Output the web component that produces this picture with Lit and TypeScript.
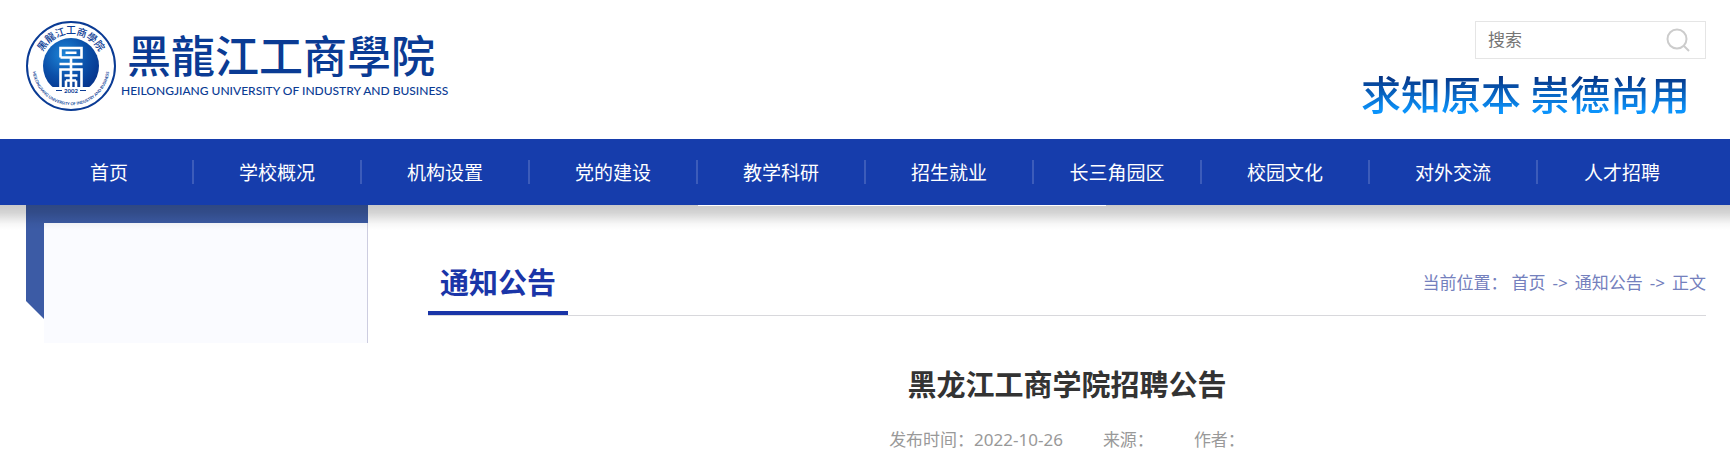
import { LitElement, html, css } from "lit";
import { customElement } from "lit/decorators.js";

const NAV = ["首页", "学校概况", "机构设置", "党的建设", "教学科研", "招生就业", "长三角园区", "校园文化", "对外交流", "人才招聘"];

@customElement("site-emblem")
class SiteEmblem extends LitElement {
  static styles = css`
    :host { display: block; width: 90px; height: 92px; }
    svg { display: block; width: 100%; height: 100%; }
    text { font-family: "Noto Sans CJK SC", sans-serif; fill: #0a3b94; }
    .cn { font-size: 10px; font-weight: 500; }
    .en { font-size: 4px; font-weight: 700; font-family: Lato, sans-serif; }
    .year { font-size: 6px; font-weight: 700; font-family: Lato, sans-serif; }
  `;
  render() {
    return html`<svg viewBox="1 0 90 92" role="img" aria-label="黑龙江工商学院校徽">
      <defs>
        <radialGradient id="disc" cx="0.38" cy="0.3" r="0.75">
          <stop offset="0" stop-color="#1d86d8" /><stop offset="0.55" stop-color="#0b4fa8" /><stop offset="1" stop-color="#053189" />
        </radialGradient>
        <path id="top" d="M14.5 46 A31.5 31.5 0 0 1 77.5 46" />
        <path id="bottom" d="M8.500 38 A38.5 38.5 0 1 0 83.500 38" />
      </defs>
      <circle cx="46" cy="46" r="44" fill="#fff" stroke="#0a3b94" stroke-width="2" />
      <circle cx="46" cy="46" r="28" fill="url(#disc)" />
      <text class="cn"><textPath href="#top" startOffset="50%" text-anchor="middle">黑龍江工商學院</textPath></text>
      <text class="en"><textPath href="#bottom" startOffset="50%" text-anchor="middle">HEILONGJIANG UNIVERSITY OF INDUSTRY AND BUSINESS</textPath></text>
      <path d="M27 67 H65 V75 H27 Z" fill="#fff" />
      <text class="year" x="46" y="73" text-anchor="middle">2002</text>
      <path d="M31 70.500 H37 M55 70.500 H61" stroke="#0a3b94" stroke-width="1" />
      <g fill="none" stroke="#fff" stroke-width="2.6">
        <path d="M35.500 37.500 V28 H56.500 V37.500 H35.500 M40.500 32.800 H51.500 M46 37.500 V44 M34.500 44 H57.500" />
        <path d="M35.500 67 V49.500 H56.500 V67 M46 44 V67 M39.500 55.500 H52.500 M41 60.500 H51 M41 60.500 V67 M51 60.500 V67" />
      </g>
    </svg>`;
  }
}

@customElement("app-root")
class AppRoot extends LitElement {
  static styles = css`
    :host { display: block; min-height: 100vh; background: #fff; color: #333; font-family: "Noto Sans", "Noto Sans CJK SC", sans-serif; font-size: 17px; line-height: 24px; }
    * { box-sizing: border-box; }
    a { color: inherit; text-decoration: none; }
    h1, h2, p, ul { margin: 0; padding: 0; }
    .wrap { padding: 0 24px 0 26px; }
    .top { display: flex; justify-content: space-between; padding-top: 20px; height: 139px; }
    .brand { display: flex; align-items: flex-start; gap: 5px; color: #0a3b94; }
    .names { display: flex; flex-direction: column; padding-top: 8px; }
    .cn { font-family: "Noto Sans CJK SC", sans-serif; font-size: 44px; line-height: 52px; font-weight: 500; padding-left: 6px; }
    .en { font-family: Lato, sans-serif; font-size: 12px; line-height: 22px; font-weight: 500; }
    .tools { display: flex; flex-direction: column; align-items: flex-end; padding-top: 1px; }
    .search { display: flex; align-items: center; width: 231px; height: 38px; border: 1px solid #e5e5e5; padding: 0 15px 0 12px; }
    .search input { flex: 1; min-width: 0; border: 0; outline: 0; padding: 0 0 2px; background: none; font: inherit; color: #333; height: 34px; }
    .search input::placeholder { color: #757575; opacity: 1; }
    .search button { border: 0; padding: 0; background: none; width: 24px; height: 24px; }
    .search svg { display: block; }
    .motto { font-family: "Noto Sans CJK SC", sans-serif; font-size: 40px; line-height: 44px; font-weight: 500; margin: 12px 16px 0 0; background: linear-gradient(#053080 10%, #0b93fb 90%); -webkit-background-clip: text; background-clip: text; color: transparent; }
    .bar { position: relative; z-index: 1; background: #163dac; }
    .bar::after { content: ""; position: absolute; left: 0; right: 0; top: 100%; height: 25px; background: linear-gradient(rgba(0, 0, 0, 0.21), rgba(0, 0, 0, 0.17) 30%, rgba(0, 0, 0, 0.1) 52%, rgba(0, 0, 0, 0.03) 76%, transparent); pointer-events: none; }
    .nav { display: grid; grid-template-columns: repeat(10, 1fr); list-style: none; }
    .nav li { display: flex; align-items: center; height: 66px; }
    .nav a { flex: 1; text-align: center; color: #fff; font-size: 19px; line-height: 24px; padding-top: 2px; }
    .nav li:not(:last-child)::after { content: ""; width: 2px; height: 24px; background: #3c5cba; }
    .dropline { position: absolute; z-index: 1; top: 100%; left: 698px; width: 408px; height: 1px; background: #fff; }
    .main { display: flex; gap: 60px; }
    .side { width: 342px; height: 138px; display: flex; background: #3c5ba5; padding-top: 18px; clip-path: polygon(0 0, 100% 0, 100% 100%, 18px 100%, 18px 114px, 0 96px); }
    .panel { flex: 1; margin-left: 18px; background: #fafbff; border-right: 1px solid #cdcde0; }
    .content { flex: 1; min-width: 0; padding-top: 48px; }
    .head { display: flex; justify-content: space-between; border-bottom: 1px solid #d8d8dc; color: #7480bd; }
    .head h2 { font-size: 29px; line-height: 56px; font-weight: 700; color: #1a35a8; padding: 2px 12px 0; border-bottom: 4px solid #1a35a8; }
    .crumbs, .trail { display: flex; line-height: 60px; }
    .crumbs { gap: 4px; }
    .trail { gap: 7px; }
    .article { text-align: center; }
    .article h1 { font-size: 29px; line-height: 40px; font-weight: 700; padding-top: 49px; color: #333; }
    .meta { display: flex; justify-content: center; gap: 40px; padding-top: 23px; color: #999; }
  `;
  render() {
    return html`
      <header class="top wrap">
        <a class="brand" href="#">
          <site-emblem></site-emblem>
          <span class="names">
            <span class="cn">黑龍江工商學院</span>
            <span class="en">HEILONGJIANG UNIVERSITY OF INDUSTRY AND BUSINESS</span>
          </span>
        </a>
        <div class="tools">
          <form class="search">
            <input type="text" placeholder="搜索" aria-label="搜索" />
            <button type="button" aria-label="搜索">
              <svg width="24" height="24" viewBox="0 0 24 24" fill="none" stroke="#ccc" stroke-width="2"><circle cx="11" cy="11" r="9.500" /><path d="M17.500 17.500 L23 23" /></svg>
            </button>
          </form>
          <p class="motto">求知原本 崇德尚用</p>
        </div>
      </header>
      <nav class="bar wrap">
        <ul class="nav">${NAV.map((n) => html`<li><a href="#">${n}</a></li>`)}</ul>
        <span class="dropline"></span>
      </nav>
      <main class="main wrap">
        <aside class="side"><div class="panel"></div></aside>
        <section class="content">
          <div class="head">
            <h2>通知公告</h2>
            <div class="crumbs">
              <span>当前位置：</span>
              <span class="trail"><a href="#">首页</a><span>-></span><a href="#">通知公告</a><span>-></span><span>正文</span></span>
            </div>
          </div>
          <article class="article">
            <h1>黑龙江工商学院招聘公告</h1>
            <p class="meta"><span>发布时间：2022-10-26</span><span>来源：</span><span>作者：</span></p>
          </article>
        </section>
      </main>
    `;
  }
}
